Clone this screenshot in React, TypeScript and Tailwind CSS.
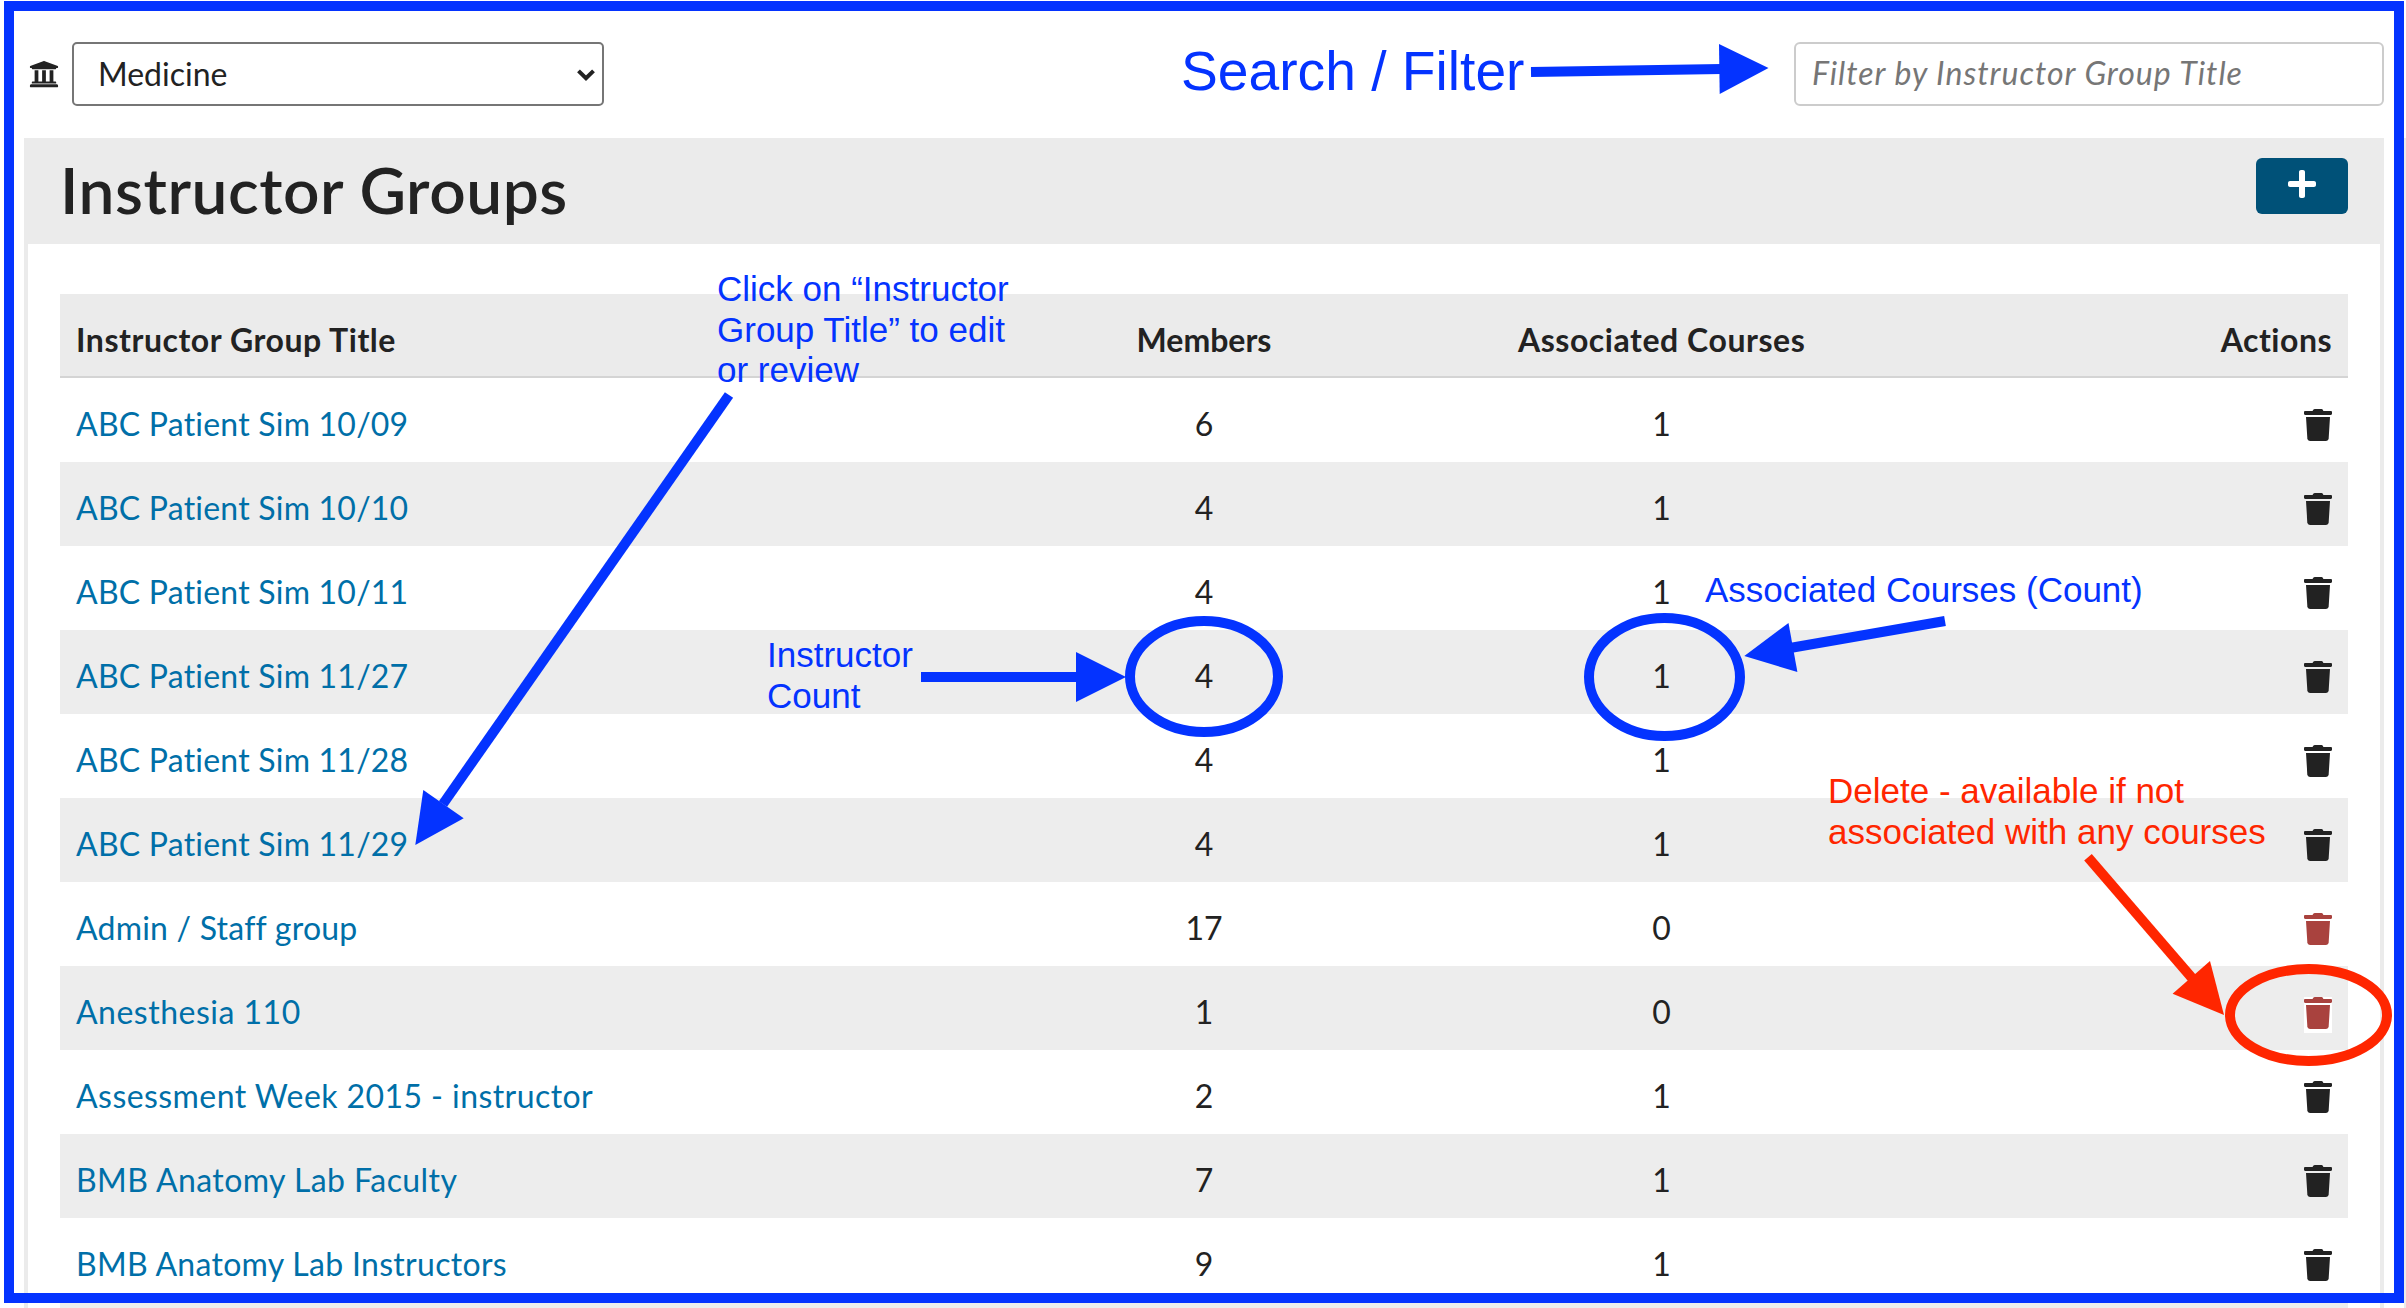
import { FaPlus, FaUniversity } from "react-icons/fa";

type Group = {
  title: string;
  members: number;
  courses: number;
  tracking: string;
  highlighted?: boolean;
};

const groups: Group[] = [
  { title: "ABC Patient Sim 10/09", members: 6, courses: 1, tracking: "tracking-[0.22px]" },
  { title: "ABC Patient Sim 10/10", members: 4, courses: 1, tracking: "tracking-[0.22px]" },
  { title: "ABC Patient Sim 10/11", members: 4, courses: 1, tracking: "tracking-[0.22px]" },
  { title: "ABC Patient Sim 11/27", members: 4, courses: 1, tracking: "tracking-[0.22px]" },
  { title: "ABC Patient Sim 11/28", members: 4, courses: 1, tracking: "tracking-[0.22px]" },
  { title: "ABC Patient Sim 11/29", members: 4, courses: 1, tracking: "tracking-[0.22px]" },
  { title: "Admin / Staff group", members: 17, courses: 0, tracking: "tracking-[0.22px]" },
  { title: "Anesthesia 110", members: 1, courses: 0, tracking: "tracking-[0.5px]", highlighted: true },
  { title: "Assessment Week 2015 - instructor", members: 2, courses: 1, tracking: "tracking-[0.43px]" },
  { title: "BMB Anatomy Lab Faculty", members: 7, courses: 1, tracking: "tracking-[0.43px]" },
  { title: "BMB Anatomy Lab Instructors", members: 9, courses: 1, tracking: "tracking-[0.3px]" },
];

function TrashIcon() {
  return (
    <svg viewBox="0 0 28 32" className="h-8 w-7 fill-current">
      <path d="M10.4 0.3C9.6 0.3 9 0.9 8.6 2H1.2C0.5 2 0 2.5 0 3.2V4.8C0 5.5 0.5 6 1.2 6H26.8C27.5 6 28 5.5 28 4.8V3.2C28 2.5 27.5 2 26.8 2H19.4C19 0.9 18.4 0 17.6 0H10.4Z" />
      <path d="M2 8H26L24.7 29.2C24.6 30.8 23.5 32 21.7 32H6.3C4.5 32 3.4 30.8 3.3 29.2Z" />
    </svg>
  );
}

function Toolbar() {
  return (
    <div className="flex h-[138px] items-start justify-between pt-[42px] pr-[22px] pl-[29px]">
      <div className="flex h-16 items-center">
        <FaUniversity className="size-[30px]" />
        <div className="relative ml-[13px]">
          <select className="h-16 w-[532px] appearance-none rounded-[5px] border-2 border-[#767676] bg-white pl-6 text-[32px] leading-[60px]">
            <option>Medicine</option>
          </select>
          <svg
            viewBox="0 0 18 12"
            className="pointer-events-none absolute top-[27px] right-[9px] h-3 w-[18px]"
            fill="none"
            stroke="#222"
            strokeWidth="4"
          >
            <path d="M1.5 1.8 9 9.2 16.5 1.8" />
          </svg>
        </div>
      </div>
      <input
        type="text"
        placeholder="Filter by Instructor Group Title"
        className="h-16 w-[590px] rounded-[6px] border-2 border-[#ccc] pb-1 pl-4 text-[32px] tracking-[1px] italic placeholder:text-[#767676]"
      />
    </div>
  );
}

function HeaderBar() {
  return (
    <header className="flex h-[106px] items-start justify-between bg-[#ebebeb] pt-5 pr-9 pl-9">
      <h1 className="-mt-5 text-[64px] leading-[104px] font-semibold tracking-[0.55px]">
        Instructor Groups
      </h1>
      <button className="flex h-14 w-[92px] justify-center rounded-[6px] bg-[#005178] pt-[10px] text-white">
        <FaPlus className="size-8" />
      </button>
    </header>
  );
}

function GroupTable() {
  return (
    <div className="mx-8 text-[32px]">
      <div className="grid h-[84px] grid-cols-[2fr_1fr_1fr_1fr] items-center border-b-2 border-[#d4d4d4] bg-[#ebebeb] pt-[10px] font-bold tracking-[0.55px]">
        <div className="pl-4">Instructor Group Title</div>
        <div className="text-center tracking-normal">Members</div>
        <div className="text-center">Associated Courses</div>
        <div className="pr-4 text-right tracking-[0.5px]">Actions</div>
      </div>
      {groups.map((group) => (
        <div
          key={group.title}
          className="grid h-[84px] grid-cols-[2fr_1fr_1fr_1fr] items-center pt-[7px] even:bg-white odd:bg-[#ededed]"
        >
          <div className={"pl-4 text-[#006fa8] " + group.tracking}>{group.title}</div>
          <div className="text-center">{group.members}</div>
          <div className="text-center">{group.courses}</div>
          <div className="flex justify-end pr-4">
            <div
              className={
                (group.courses === 0 ? "text-[#a9423e]" : "text-[#222]") +
                " h-9 w-7 mt-[7px]" +
                (group.highlighted ? " bg-white" : "")
              }
            >
              <TrashIcon />
            </div>
          </div>
        </div>
      ))}
      <div className="h-2 bg-[#ededed]" />
    </div>
  );
}

const noteText =
  "absolute whitespace-nowrap font-['Liberation_Sans',Arial,sans-serif] text-[35px] leading-[40.7px]";

function Annotations() {
  return (
    <div className="pointer-events-none absolute inset-0 text-[#0433ff]">
      <div className="absolute top-[1px] right-[2px] bottom-[5px] left-[4px] border-10 border-[#0433ff]" />
      <svg viewBox="0 0 2406 1308" className="absolute inset-0 h-[1308px] w-[2406px]">
        <g stroke="#0433ff" strokeWidth="10" fill="none">
          <path d="M1531 72 1722 69" />
          <path d="M729 395 443 804" />
          <path d="M921 677H1080" />
          <path d="M1945 621 1790 648" />
          <ellipse cx="1204" cy="676.5" rx="74" ry="55.5" />
          <ellipse cx="1664.5" cy="677" rx="75.5" ry="59" />
        </g>
        <g fill="#0433ff">
          <path d="M1719 44 1768.5 68 1719.7 94Z" />
          <path d="M423.3 790 463.7 818.3 415.3 845Z" />
          <path d="M1076 652 1126 677 1076 702Z" />
          <path d="M1788.5 623 1797.4 672 1744.3 656Z" />
        </g>
        <g stroke="#ff2600" strokeWidth="10" fill="none">
          <path d="M2088 857.3 2192 978" />
          <ellipse cx="2308.5" cy="1015" rx="78.5" ry="46" />
        </g>
        <path d="M2210 961 2224 1015 2172.6 993.7Z" fill="#ff2600" />
      </svg>
      <div className="absolute top-[39px] left-[1181px] font-['Liberation_Sans',Arial,sans-serif] text-[55.2px] leading-[64px] whitespace-nowrap">
        Search / Filter
      </div>
      <div className={noteText + " top-[269px] left-[717px]"}>
        Click on “Instructor
        <br />
        Group Title” to edit
        <br />
        or review
      </div>
      <div className={noteText + " top-[635px] left-[767px]"}>
        Instructor
        <br />
        Count
      </div>
      <div className={noteText + " top-[570px] left-[1705px]"}>Associated Courses (Count)</div>
      <div className={noteText + " top-[771px] left-[1828px] text-[#ff2600]"}>
        Delete - available if not
        <br />
        associated with any courses
      </div>
    </div>
  );
}

export default function App() {
  return (
    <div className="relative h-[1308px] w-[2406px] overflow-hidden bg-white font-['Lato','Open_Sans',sans-serif] text-[#222] [font-variant-ligatures:none]">
      <Toolbar />
      <div className="flex justify-between">
        <main className="ml-6 w-[2360px]">
          <HeaderBar />
          <div className="border-x-4 border-[#ebebeb] pt-[50px]">
            <GroupTable />
          </div>
        </main>
        <div className="w-[2px] bg-[#ebebeb]" />
      </div>
      <Annotations />
    </div>
  );
}
